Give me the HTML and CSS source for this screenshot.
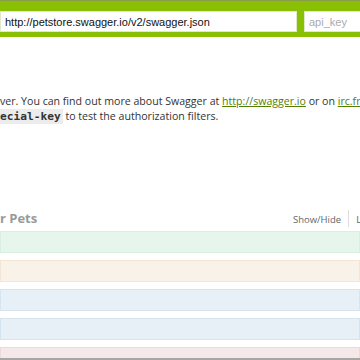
FILE: index.html
```html
<!DOCTYPE html>
<html lang="en">
<head>
  <meta charset="UTF-8" />
  <meta name="viewport" content="width=device-width, initial-scale=1.0" />
  <title>Swagger UI</title>
  <link rel="stylesheet" href="styles.css">
</head>
<body>
  <header class="topbar">
    <input type="text" class="url" value="http://petstore.swagger.io/v2/swagger.json" />
    <input type="text" class="key" placeholder="api_key" />
  </header>
  <main>
    <div class="info">
      <p class="line">ver. You can find out more about Swagger at <a href="#">http://swagger.io</a> or on <a href="#">irc.freenode.net, #swagger</a>.</p>
      <p class="line"><code>ecial-key</code> to test the authorization filters.</p>
    </div>

    <div class="resource">
      <div class="resource-head">
        <h2>r Pets</h2>
        <ul class="options">
          <li><a href="#">Show/Hide</a></li>
          <li><a href="#">List Operations</a></li>
        </ul>
      </div>
      <ul class="ops">
        <li class="op post"></li>
        <li class="op put"></li>
        <li class="op get"></li>
        <li class="op get"></li>
        <li class="op delete"></li>
      </ul>
    </div>
  </main>
</body>
</html>
```

FILE: styles.css
```css
body {
  margin: 0;
  width: 360px;
  height: 360px;
  box-sizing: border-box;
  overflow: hidden;
  background: #fff;
  border-bottom: 2px solid #a6a6a6;
  font-family: "Open Sans", "DejaVu Sans", sans-serif;
  color: #333;
}
.topbar {
  display: flex;
  gap: 7px;
  height: 37px;
  padding-top: 10px;
  box-sizing: border-box;
  background-color: #89bf04;
  border-top: 1px solid #8a9c4a;
}
.topbar input {
  height: 21px;
  box-sizing: border-box;
  margin: 0;
  padding: 0 4px;
  border: 1px solid #e0e8cc;
  background: #fff;
  font-family: "Liberation Sans", Arial, sans-serif;
  font-size: 11px;
  color: #111;
  outline: none;
}
.url {
  flex: 0 0 297px;
}
.key {
  flex: 0 0 80px;
}
.key::placeholder {
  color: #aaa;
}
.info {
  padding-top: 57px;
}
.line {
  margin: 0;
  white-space: nowrap;
  font-size: 10.6px;
  line-height: 15px;
}
.line a {
  color: #547f00;
}
code {
  display: inline-block;
  background: #ececec;
  padding: 0 2px 0 0;
  font-family: "DejaVu Sans Mono", monospace;
  font-weight: bold;
  font-size: 11.2px;
  line-height: 15px;
  color: #333;
}
.resource {
  margin-top: 81px;
}
.resource-head {
  display: flex;
  align-items: center;
  height: 26px;
}
.resource-head h2 {
  flex: 0 0 293px;
  margin: 0;
  font-size: 13px;
  font-weight: bold;
  color: #999;
}
.options {
  display: flex;
  flex: none;
  margin: 0;
  padding: 0;
  list-style: none;
  white-space: nowrap;
}
.options li {
  padding: 0 7px;
  border-left: 1px solid #ddd;
  line-height: 14px;
}
.options li:first-child {
  padding-left: 0;
  border-left: none;
}
.options a {
  color: #666;
  font-size: 9.5px;
  text-decoration: none;
}
.ops {
  margin: 0;
  padding: 0;
  list-style: none;
  display: flex;
  flex-direction: column;
  gap: 7px;
}
.op {
  height: 22px;
  box-sizing: border-box;
  border: 1px solid;
}
.post {
  background: #e7f6ec;
  border-color: #d9efe1;
}
.put {
  background: #f9f2e9;
  border-color: #f3e6d6;
}
.get {
  background: #e7f0f7;
  border-color: #d6e4f0;
}
.delete {
  background: #f5e8e8;
  border-color: #eed8d8;
}
```
